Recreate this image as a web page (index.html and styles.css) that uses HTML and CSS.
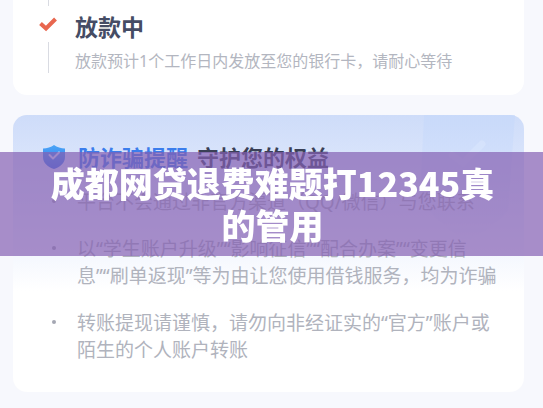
FILE: index.html
```
<!DOCTYPE html>
<html lang="zh-CN">
<head>
    <meta charset="UTF-8">
    <meta name="viewport" content="width=device-width, initial-scale=1.0">
    <title>成都网贷退费难题打12345真的管用</title>
    <link rel="stylesheet" href="styles.css">
</head>
<body>
    <main class="page">
        <section class="card progress">
            <div class="track">
                <span class="line line-top"></span>
                <svg class="tick" viewBox="0 0 20 16" aria-hidden="true">
                    <path d="M2.500 7.500 L8 12.500 L17.500 3" fill="none" stroke="#e8674f" stroke-width="4"/>
                </svg>
                <span class="line"></span>
            </div>
            <div class="step">
                <h2 class="step-title">放款中</h2>
                <p class="step-text">放款预计1个工作日内发放至您的银行卡，请耐心等待</p>
            </div>
        </section>

        <section class="card notice">
            <svg class="watermark" viewBox="0 0 104 130" aria-hidden="true">
                <defs>
                    <linearGradient id="markFill" x1="0" y1="0" x2="0" y2="1">
                        <stop offset="0" stop-color="#c3d7fb" stop-opacity=".5"/>
                        <stop offset="1" stop-color="#c3d7fb" stop-opacity="0"/>
                    </linearGradient>
                </defs>
                <path d="M4 0 H95 L88 96 Q70 116 46 126 Q14 106 0 84 Z" fill="url(#markFill)"/>
                <path d="M32 40 L43 48 L62 29" fill="none" stroke="#dbe7fd" stroke-width="7" stroke-linecap="round" opacity=".5"/>
            </svg>
            <div class="notice-head">
                <svg class="shield" viewBox="0 0 22 24" aria-hidden="true">
                    <defs>
                        <linearGradient id="shieldFill" x1="0" y1="0" x2="0" y2="1">
                            <stop offset="0" stop-color="#4ba6f7"/>
                            <stop offset="1" stop-color="#3374e8"/>
                        </linearGradient>
                    </defs>
                    <path d="M11 0 C14 2.200 18 3.500 22 3.500 V12 C22 18 17 22 11 24 C5 22 0 18 0 12 V3.500 C4 3.500 8 2.200 11 0 Z" fill="url(#shieldFill)"/>
                    <path d="M6.500 10 L10 13.500 L16 7.500" fill="none" stroke="#dcecff" stroke-width="2" stroke-linecap="round" stroke-linejoin="round"/>
                </svg>
                <h2 class="notice-title"><span class="blue">防诈骗提醒</span><span>守护您的权益</span></h2>
            </div>
            <ul class="tips">
                <li>平台不会通过非官方渠道（QQ/微信）与您联系</li>
                <li>以“学生账户升级”“影响征信”“配合办案”“变更信<br>息”“刷单返现”等为由让您使用借钱服务，均为诈骗</li>
                <li>转账提现请谨慎，请勿向非经证实的“官方”账户或陌生的个人账户转账</li>
            </ul>
        </section>
    </main>

    <div class="banner">
        <h1>成都网贷退费难题打12345真的管用</h1>
    </div>
</body>
</html>
```
FILE: styles.css
```
* {
    box-sizing: border-box;
}
body {
    margin: 0;
    background-color: #f7f8fd;
    font-family: "Noto Sans", "Noto Sans CJK SC", sans-serif;
}
h1, h2, p, ul {
    margin: 0;
    padding: 0;
}
.page {
    display: flex;
    flex-direction: column;
    gap: 20px;
    padding: 0 19px 16px 13px;
}
.card {
    background-color: #fff;
    border-radius: 14px;
}
.progress {
    display: flex;
    gap: 17px;
    padding: 0 24px 22px 25px;
    border-top-left-radius: 0;
    border-top-right-radius: 0;
}
.track {
    display: flex;
    flex-direction: column;
    align-items: center;
    gap: 10px;
    width: 20px;
}
.line {
    width: 1px;
    flex: 1;
    background-color: #d9dbe2;
}
.line-top {
    flex: 0 0 6px;
}
.tick {
    width: 20px;
    height: 16px;
}
.step {
    padding-top: 11px;
}
.step-title {
    font-size: 23px;
    line-height: 32px;
    font-weight: 700;
    color: #454c64;
}
.step-text {
    margin-top: 6px;
    font-size: 16px;
    line-height: 24px;
    color: #b3b6c0;
}
.notice {
    position: relative;
    padding: 26px 24px 28px 30px;
    background-image: linear-gradient(#cedcf9 0, #dde7fc 60px, #fff 176px);
}
.watermark {
    position: absolute;
    top: 0;
    right: 0;
    width: 104px;
    height: 130px;
}
.notice-head {
    position: relative;
    display: flex;
    align-items: center;
    gap: 13px;
}
.shield {
    width: 22px;
    height: 24px;
}
.notice-title {
    display: flex;
    gap: 9px;
    font-size: 22px;
    line-height: 32px;
    font-weight: 700;
    color: #3a4056;
}
.blue {
    color: #3b7dec;
}
.tips {
    position: relative;
    display: flex;
    flex-direction: column;
    gap: 20px;
    margin-top: 16px;
    padding-left: 34px;
    list-style: none;
    font-size: 19px;
    line-height: 27px;
    color: #b0b3bd;
}
.tips li {
    position: relative;
}
.tips li::before {
    content: "";
    position: absolute;
    left: -25px;
    top: 10px;
    width: 4px;
    height: 4px;
    border-radius: 50%;
    background-color: #a4a7b3;
}
.banner {
    position: fixed;
    top: 50%;
    left: 0;
    right: 0;
    transform: translateY(-50%);
    padding: 10px 38px 10px 40px;
    background-color: rgba(133, 96, 178, 0.7);
    text-align: center;
}
.banner h1 {
    font-family: "Noto Sans CJK SC", sans-serif;
    font-size: 34px;
    line-height: 42px;
    font-weight: 900;
    color: #fff;
}
```
